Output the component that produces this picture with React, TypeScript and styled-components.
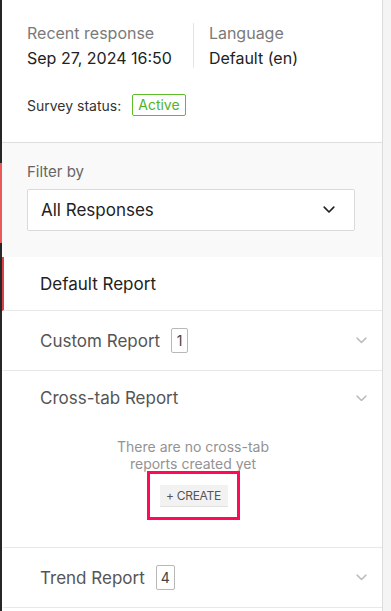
import React from 'react';
import styled, { createGlobalStyle } from 'styled-components';

const GlobalStyle = createGlobalStyle`
  html, body {
    margin: 0;
    padding: 0;
    background: #f4f4f4;
    font-family: Inter, 'Noto Sans', sans-serif;
  }
  * { box-sizing: border-box; }
`;

const Page = styled.div`
  display: flex;
  height: 611px;
  overflow: hidden;
`;

const Rail = styled.div`
  width: 2px;
  display: flex;
  flex-direction: column;
  background: #262626;
`;

const RailSegment = styled.div<{ $h: number; $red?: boolean }>`
  height: ${(p) => p.$h}px;
  background: ${(p) => (p.$red ? '#e85a5a' : '#262626')};
`;

const Panel = styled.div`
  width: 381px;
  background: #fff;
  border-right: 1px solid #dcdcdc;
  display: flex;
  flex-direction: column;
`;

const Summary = styled.section`
  padding: 23px 25px 0;
  height: 143px;
  border-bottom: 1px solid #dedede;
  box-shadow: 0 1px 1px rgba(0, 0, 0, 0.04);
`;

const InfoRow = styled.div`
  display: flex;
  align-items: stretch;
`;

const InfoCell = styled.div<{ $divider?: boolean }>`
  display: flex;
  flex-direction: column;
  gap: 5px;
  padding-right: ${(p) => (p.$divider ? '21px' : '0')};
  padding-left: ${(p) => (p.$divider ? '0' : '15px')};
  border-right: ${(p) => (p.$divider ? '1px solid #e4e4e4' : 'none')};
`;

const InfoLabel = styled.div`
  font-size: 16px;
  color: #7a7a7a;
  line-height: 20px;
`;

const InfoValue = styled.div`
  font-size: 16px;
  color: #222;
  line-height: 20px;
`;

const StatusRow = styled.div`
  display: flex;
  align-items: center;
  gap: 11px;
  margin-top: 26px;
  font-size: 14px;
  color: #333;
`;

const StatusBadge = styled.span`
  border: 1px solid #5cbf2a;
  border-radius: 2px;
  color: #4fb41f;
  font-size: 14px;
  padding: 2px 5px;
  line-height: 16px;
`;

const FilterSection = styled.section`
  background: #f9f9f9;
  padding: 20px 27px 0 25px;
  height: 114px;
`;

const FilterLabel = styled.div`
  font-size: 15px;
  color: #666;
  line-height: 18px;
  margin-bottom: 8px;
`;

const Select = styled.div`
  height: 42px;
  background: #fff;
  border: 1px solid #dadada;
  border-radius: 2px;
  display: flex;
  align-items: center;
  justify-content: space-between;
  padding: 0 19px 0 13px;
  font-size: 17px;
  color: #222;
`;

const ReportItem = styled.div<{ $active?: boolean; $h: number }>`
  height: ${(p) => p.$h}px;
  border-bottom: 1px solid #e8e8e8;
  border-left: 2px solid ${(p) => (p.$active ? '#d9434a' : 'transparent')};
  display: flex;
  flex-direction: column;
`;

const ItemHeader = styled.div<{ $h: number }>`
  height: ${(p) => p.$h}px;
  display: flex;
  align-items: center;
  padding: 0 15px 0 36px;
  gap: 11px;
`;

const ItemTitle = styled.span<{ $active?: boolean }>`
  font-size: 17px;
  color: ${(p) => (p.$active ? '#222' : '#555')};
`;

const CountBadge = styled.span`
  min-width: 17px;
  height: 25px;
  border: 1px solid #b8b8b8;
  border-radius: 2px;
  font-size: 14px;
  color: #444;
  display: inline-flex;
  align-items: center;
  justify-content: center;
  padding: 0 4px;
`;

const Chevron = styled.span`
  margin-left: auto;
  display: flex;
`;

const EmptyState = styled.div`
  display: flex;
  flex-direction: column;
  align-items: center;
  padding-top: 13px;
`;

const EmptyText = styled.p`
  margin: 0;
  text-align: center;
  font-size: 14px;
  line-height: 17px;
  color: #939393;
  width: 170px;
`;

const Highlight = styled.div`
  margin-top: -1px;
  border: 3px solid #ff0a57;
  padding: 10px 9px 11px 10px;
`;

const CreateButton = styled.button`
  border: none;
  background: #f2f2f2;
  box-shadow: 0 1px 0 #e2e2e2;
  height: 21px;
  width: 68px;
  padding: 0;
  font-family: inherit;
  font-size: 12px;
  letter-spacing: -0.3px;
  color: #555;
`;

const ChevronIcon = ({ color, size }: { color: string; size: number }) => (
  <svg width={size} height={size * 0.6} viewBox="0 0 10 6" fill="none">
    <path d="M1 1l4 4 4-4" stroke={color} strokeWidth={1.4} strokeLinecap="round" strokeLinejoin="round" />
  </svg>
);

export default function App() {
  return (
    <>
      <GlobalStyle />
      <Page>
        <Rail>
          <RailSegment $h={163} />
          <RailSegment $h={80} $red />
          <RailSegment $h={368} />
        </Rail>
        <Panel>
          <Summary>
            <InfoRow>
              <InfoCell $divider>
                <InfoLabel>Recent response</InfoLabel>
                <InfoValue>Sep 27, 2024 16:50</InfoValue>
              </InfoCell>
              <InfoCell>
                <InfoLabel>Language</InfoLabel>
                <InfoValue>Default (en)</InfoValue>
              </InfoCell>
            </InfoRow>
            <StatusRow>
              Survey status:
              <StatusBadge>Active</StatusBadge>
            </StatusRow>
          </Summary>
          <FilterSection>
            <FilterLabel>Filter by</FilterLabel>
            <Select>
              All Responses
              <ChevronIcon color="#222" size={12} />
            </Select>
          </FilterSection>
          <ReportItem $active $h={54}>
            <ItemHeader $h={53}>
              <ItemTitle $active>Default Report</ItemTitle>
            </ItemHeader>
          </ReportItem>
          <ReportItem $h={60}>
            <ItemHeader $h={59}>
              <ItemTitle>Custom Report</ItemTitle>
              <CountBadge>1</CountBadge>
              <Chevron>
                <ChevronIcon color="#bdbdbd" size={11} />
              </Chevron>
            </ItemHeader>
          </ReportItem>
          <ReportItem $h={177}>
            <ItemHeader $h={54}>
              <ItemTitle>Cross-tab Report</ItemTitle>
              <Chevron>
                <ChevronIcon color="#bdbdbd" size={11} />
              </Chevron>
            </ItemHeader>
            <EmptyState>
              <EmptyText>There are no cross-tab reports created yet</EmptyText>
              <Highlight>
                <CreateButton>+ CREATE</CreateButton>
              </Highlight>
            </EmptyState>
          </ReportItem>
          <ReportItem $h={60}>
            <ItemHeader $h={59}>
              <ItemTitle>Trend Report</ItemTitle>
              <CountBadge>4</CountBadge>
              <Chevron>
                <ChevronIcon color="#bdbdbd" size={11} />
              </Chevron>
            </ItemHeader>
          </ReportItem>
        </Panel>
      </Page>
    </>
  );
}
